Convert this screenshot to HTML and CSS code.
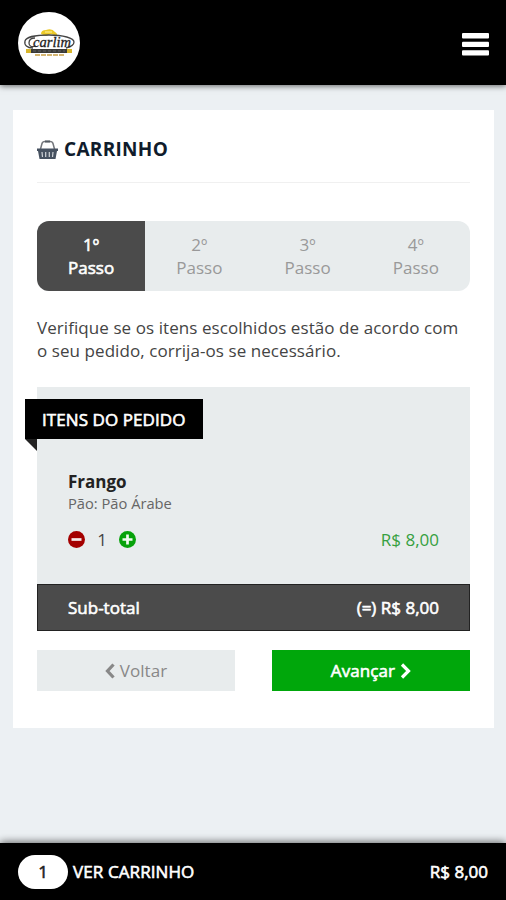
FILE: index.html
```html
<!DOCTYPE html>
<html lang="pt-BR">
<head>
<meta charset="utf-8">
<title>Carrinho</title>
<link rel="stylesheet" href="styles.css">
</head>
<body>
<header class="topbar">
  <div class="logo">
    <svg width="62" height="62" viewBox="0 0 62 62">
      <circle cx="31" cy="31" r="31" fill="#fff"/>
      <path d="M23 22q0-4 5-4q6-2 9 2q3 2 2 4l-6-2-5 2z" fill="#ecc927"/>
      <path d="M27 20h7" stroke="#fff3a0" stroke-width="1"/>
      <path d="M15 36C9 36 6 33 7 29c1-4 12-6 24-6 14 0 25 3 25 7 0 3-4 5-8 6" fill="none" stroke="#444" stroke-width="1.3"/>
      <path d="M17 26q-6 0-6 5t7 3" fill="none" stroke="#444" stroke-width="1.3"/>
      <text class="logo-name" x="15" y="35" textLength="38" lengthAdjust="spacingAndGlyphs">carlim</text>
      <path d="M8 37h46v4H8z" fill="#3a3a38"/>
      <path d="M8 37h5v4H8zM49 37h5v4h-5z" fill="#d8b62c"/>
      <path d="M15 39h32" stroke="#777" stroke-width=".7" stroke-dasharray="3 2"/>
      <path d="M17 43h29" stroke="#c79e45" stroke-width="1.5" stroke-dasharray="5 1"/>
    </svg>
  </div>
  <svg class="menu" width="27" height="23" viewBox="0 0 27 23" fill="#fff"><rect width="27" height="5.4" rx="1"/><rect y="8.7" width="27" height="5.4" rx="1"/><rect y="17.2" width="27" height="5.4" rx="1"/></svg>
</header>
<main class="card">
  <h1 class="title">
    <svg width="21" height="20" viewBox="0 0 21 20"><path d="M3.500 9L5 3.500Q5.500 1.500 8 1.500h5q2.500 0 3 2L17.500 9" fill="none" stroke="#74777c" stroke-width="1.500"/><path d="M8 1.500h5" stroke="#555b63" stroke-width="2"/><path d="M0 8.500h21v2.500h-1l-1.500 8h-16L1 11H0z" fill="#465160"/><path d="M5 12l.5 5M8.700 12v5M12.300 12v5M16 12l-.5 5" stroke="#d0d4d8" stroke-width="1.200"/></svg>
    <span>CARRINHO</span>
  </h1>
  <ol class="steps">
    <li class="step active">1º<br>Passo</li>
    <li class="step">2º<br>Passo</li>
    <li class="step">3º<br>Passo</li>
    <li class="step">4º<br>Passo</li>
  </ol>
  <p class="intro">Verifique se os itens escolhidos estão de acordo com<br>o seu pedido, corrija-os se necessário.</p>
  <section class="order">
    <h2 class="ribbon">ITENS DO PEDIDO</h2>
    <div class="item">
      <div class="name">Frango</div>
      <div class="detail">Pão: Pão Árabe</div>
      <div class="row">
        <svg width="17" height="17" viewBox="0 0 17 17"><circle cx="8.500" cy="8.500" r="8.500" fill="#a40000"/><path d="M3.500 8.500h10" stroke="#f5eaea" stroke-width="2.700"/></svg>
        <span class="qty">1</span>
        <svg width="17" height="17" viewBox="0 0 17 17"><circle cx="8.500" cy="8.500" r="8.500" fill="#07a20b"/><path d="M3.500 8.500h10M8.500 3.500v10" stroke="#f2fbf2" stroke-width="2.700"/></svg>
        <span class="price">R$ 8,00</span>
      </div>
    </div>
    <div class="subtotal"><span>Sub-total</span><span>(=) R$ 8,00</span></div>
  </section>
  <div class="actions">
    <button class="btn back"><svg width="10" height="16" viewBox="0 0 10 16"><path d="M8.500 1.500L2.500 8l6 6.500" fill="none" stroke="currentColor" stroke-width="3.200"/></svg><span>Voltar</span></button>
    <button class="btn next"><span>Avançar</span><svg width="11" height="16" viewBox="0 0 11 16"><path d="M2 1.500L8.500 8 2 14.500" fill="none" stroke="currentColor" stroke-width="3.200"/></svg></button>
  </div>
</main>
<footer class="cartbar"><span class="count">1</span><span class="label">VER CARRINHO</span><span class="total">R$ 8,00</span></footer>
</body>
</html>
```
FILE: styles.css
```css
* { box-sizing: border-box; }
body {
  margin: 0;
  height: 900px;
  display: flex;
  flex-direction: column;
  background: #ecf0f3;
  color: #444;
  font: 17px/23.5px "Open Sans", "Noto Sans", sans-serif;
  overflow: hidden;
}
h1, h2, p, ol { margin: 0; padding: 0; }
.topbar {
  flex: none;
  height: 85px;
  padding: 0 17px 0 18px;
  display: flex;
  justify-content: space-between;
  align-items: center;
  background: #000;
  box-shadow: 0 1px 6px rgba(0, 0, 0, .6);
}
.logo, .logo svg { display: block; }
.logo { margin-top: 1px; }
.menu { margin-top: 3px; }
.logo-name { font: italic 15px "Liberation Serif", serif; fill: #222; stroke: #222; stroke-width: .3px; }
.card {
  flex: none;
  height: 618px;
  margin: 25px 12px 0 13px;
  padding: 24px 24px 0;
  background: #fff;
}
.title {
  display: flex;
  align-items: center;
  gap: 6px;
  height: 49px;
  padding-bottom: 16px;
  border-bottom: 1px solid #f0f0f0;
  color: #101c2c;
  font-size: 19px;
  font-weight: 700;
  letter-spacing: .3px;
}
.steps {
  display: grid;
  grid-template-columns: repeat(4, 1fr);
  height: 70px;
  margin-top: 38px;
  overflow: hidden;
  border-radius: 12px;
  background: #e8eced;
  list-style: none;
  text-align: center;
}
.step { padding-top: 11.5px; color: #999; }
.step.active { background: #4b4b4b; color: #fff; -webkit-text-stroke: .6px #fff; }
.intro { margin-top: 24.5px; white-space: nowrap; letter-spacing: .07px; }
.order {
  height: 244px;
  margin-top: 24.5px;
  padding-top: 12px;
  display: flex;
  flex-direction: column;
  background: #e8eced;
}
.ribbon {
  position: relative;
  width: 178px;
  height: 40px;
  margin-left: -12px;
  padding-left: 17px;
  background: #000;
  color: #fff;
  font-size: 17px;
  font-weight: 400;
  letter-spacing: .07px;
  line-height: 41px;
  white-space: nowrap;
  -webkit-text-stroke: .6px #fff;
}
.ribbon::after {
  content: "";
  position: absolute;
  left: 0;
  top: 40px;
  border-top: 12px solid #222;
  border-left: 12px solid transparent;
}
.item { flex: 1; padding: 31px 31px 0; }
.name { color: #222; font-weight: 700; }
.detail { font-size: 14.700px; line-height: 19px; color: #666; }
.row { display: flex; align-items: center; height: 24px; margin-top: 15px; }
.qty { width: 34px; text-align: center; }
.price { margin-left: auto; color: #36a041; }
.subtotal {
  height: 47px;
  padding: 0 30px;
  display: flex;
  justify-content: space-between;
  align-items: center;
  border: 1px solid #222;
  background: #4b4b4b;
  color: #fff;
  -webkit-text-stroke: .6px #fff;
}
.actions { display: grid; grid-template-columns: 198px 198px; justify-content: space-between; margin-top: 19px; }
.btn {
  height: 41px;
  padding: 0;
  display: flex;
  align-items: center;
  justify-content: center;
  gap: 5px;
  border: 0;
  font: inherit;
  letter-spacing: .1px;
}
.back { background: #e8eced; color: #888; }
.next { background: #00a70b; color: #fff; }
.next span { -webkit-text-stroke: .6px #fff; }
.cartbar {
  height: 57px;
  margin-top: auto;
  padding: 1px 18px 0;
  display: flex;
  align-items: center;
  background: #000;
  color: #fff;
  box-shadow: 0 -1px 8px rgba(0, 0, 0, .6);
  -webkit-text-stroke: .6px #fff;
}
.label { letter-spacing: .1px; }
.count {
  width: 50px;
  height: 34px;
  margin-right: 5px;
  border-radius: 17px;
  background: #fff;
  color: #222;
  line-height: 34px;
  text-align: center;
  -webkit-text-stroke: .6px #222;
}
.total { margin-left: auto; }
```
